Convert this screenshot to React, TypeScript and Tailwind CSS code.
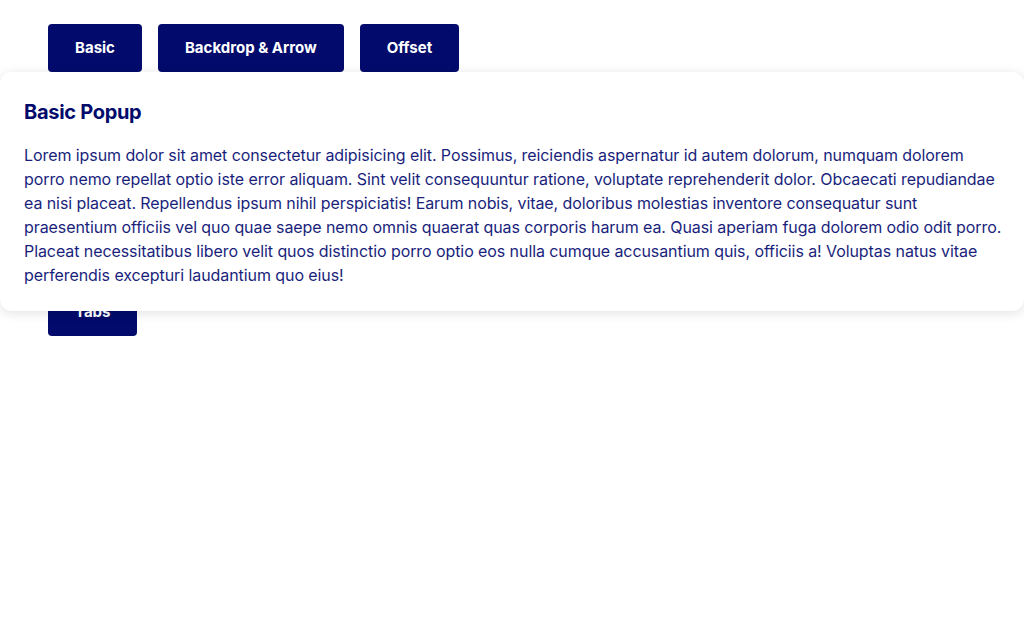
import React from "react";

const font = { fontFamily: "Inter, 'Noto Sans', sans-serif" };

function Btn({ children }: { children: React.ReactNode }) {
  return (
    <button className="h-12 px-[27px] rounded bg-[#020b6b] text-white text-[15px] font-bold">
      {children}
    </button>
  );
}

export default function App() {
  return (
    <div className="relative min-h-[643px] bg-white" style={font}>
      <div className="flex flex-col gap-[216px] px-12 pt-6">
        <div className="flex gap-4">
          <Btn>Basic</Btn>
          <Btn>Backdrop &amp; Arrow</Btn>
          <Btn>Offset</Btn>
        </div>
        <div className="flex gap-4">
          <Btn>Tabs</Btn>
        </div>
      </div>
      <div className="absolute left-0 right-0 top-[72px] rounded-xl bg-white px-6 pt-[25px] pb-6 shadow-[0_2px_12px_rgba(0,0,0,0.12)]">
        <h2 className="text-[20px] leading-[30px] font-bold text-[#020b6b] tracking-[-0.3px] mb-4">Basic Popup</h2>
        <p className="text-[16px] leading-6 text-[#1a1f7c] tracking-[-0.08px] whitespace-nowrap">
          Lorem ipsum dolor sit amet consectetur adipisicing elit. Possimus, reiciendis aspernatur id autem dolorum, numquam dolorem
          <br />
          porro nemo repellat optio iste error aliquam. Sint velit consequuntur ratione, voluptate reprehenderit dolor. Obcaecati repudiandae
          <br />
          ea nisi placeat. Repellendus ipsum nihil perspiciatis! Earum nobis, vitae, doloribus molestias inventore consequatur sunt
          <br />
          praesentium officiis vel quo quae saepe nemo omnis quaerat quas corporis harum ea. Quasi aperiam fuga dolorem odio odit porro.
          <br />
          Placeat necessitatibus libero velit quos distinctio porro optio eos nulla cumque accusantium quis, officiis a! Voluptas natus vitae
          <br />
          perferendis excepturi laudantium quo eius!
        </p>
      </div>
    </div>
  );
}
